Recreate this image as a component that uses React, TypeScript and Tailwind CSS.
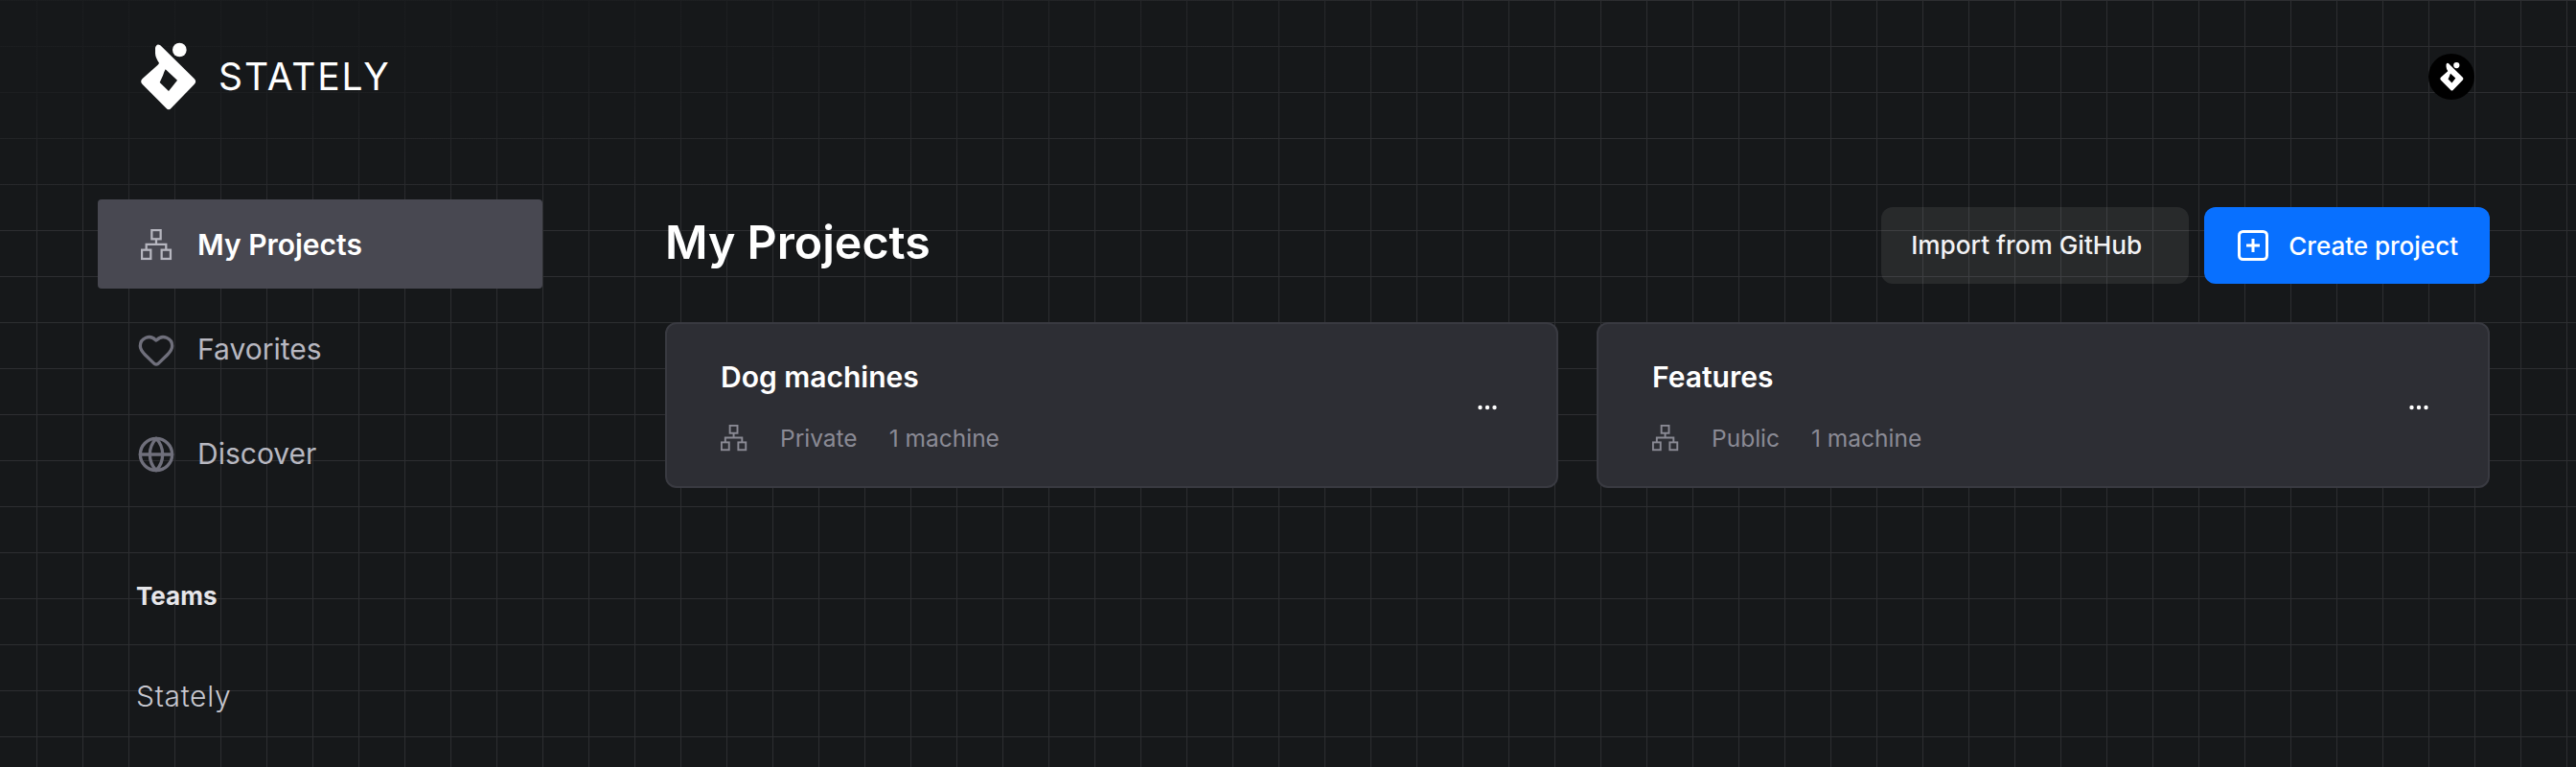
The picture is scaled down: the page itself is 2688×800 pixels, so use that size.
import { Globe, Heart } from "lucide-react";

const navItems = [
  { label: "My Projects", icon: "projects", active: true },
  { label: "Favorites", icon: "heart", active: false },
  { label: "Discover", icon: "globe", active: false },
];

const projects = [
  { name: "Dog machines", visibility: "Private" },
  { name: "Features", visibility: "Public" },
];

function ProjectsIcon({ className }: { className?: string }) {
  return (
    <svg viewBox="0 0 32 32" fill="none" stroke="currentColor" strokeWidth="2.2" className={className}>
      <rect x="11" y="1" width="9" height="9" />
      <rect x="1" y="21" width="9" height="9" />
      <rect x="21" y="21" width="9" height="9" />
      <path d="M15.5 10v5.5M5.5 21v-5.5h20V21" />
    </svg>
  );
}

function Logo({ className }: { className?: string }) {
  return (
    <svg viewBox="0 0 216 240" fill="currentColor" className={className}>
      <path
        fillRule="evenodd"
        d="M66 30Q70 14 82 22L188 126Q197 135 188 144L116 218Q108 228 100 218L26 144Q17 135 26 126L74 83Q77 80 78 77Q66 60 66 46ZM80 138L90 116Q93 106 98 97L135 131L108 165Z"
      />
      <circle cx="142" cy="36" r="22" />
    </svg>
  );
}

export default function App() {
  return (
    <div className="relative h-[800px] overflow-hidden bg-[#16181a] font-['Inter',sans-serif] [background-image:radial-gradient(ellipse_2000px_280px_at_0_0,rgba(22,24,26,0.8)_30%,transparent_85%),linear-gradient(to_right,#2d2e31_1px,transparent_1px),linear-gradient(to_bottom,#2d2e31_1px,transparent_1px)] [background-size:100%_100%,48px_48px,48px_48px] [background-position:0_0,38px_0,0_0]">
      {/* Header */}
      <header className="flex h-40 items-center justify-between pl-[140px] pr-[106px]">
        <div className="flex items-center gap-[16px]">
          <Logo className="h-20 w-[72px] text-white" />
          <span className="pb-[2px] text-[39px] font-normal leading-none tracking-[1.9px] text-white">STATELY</span>
        </div>
        <div className="flex h-12 w-12 items-center justify-center rounded-full bg-black">
          <Logo className="h-[34px] w-[31px] text-white" />
        </div>
      </header>

      <div className="flex pl-[102px] pr-[90px] pt-12">
        {/* Sidebar */}
        <aside className="w-[464px] shrink-0">
          <nav className="flex flex-col gap-4">
            {navItems.map((item) => (
              <a
                key={item.label}
                className={`flex h-[93px] items-center gap-[25px] rounded-[4px] pl-[43px] pt-[2px] text-[30px] ${
                  item.active ? "bg-[#484851] font-semibold text-white" : "font-normal text-[#b8b8c1]"
                }`}
              >
                <span className={`flex w-[36px] justify-center ${item.active ? "text-[#b6b6bf]" : "text-[#6f6f7b]"}`}>
                  {item.icon === "projects" && <ProjectsIcon className="h-[33px] w-[33px]" />}
                  {item.icon === "heart" && <Heart className="h-10 w-10 shrink-0" strokeWidth={2} />}
                  {item.icon === "globe" && <Globe className="h-10 w-10 shrink-0" strokeWidth={2} />}
                </span>
                {item.label}
              </a>
            ))}
          </nav>
          <h3 className="mt-[87px] pl-[40px] text-[26px] font-bold leading-8 text-[#e6e6ea]">Teams</h3>
          <p className="mt-[70px] pl-[40px] text-[30px] font-light leading-9 tracking-[0.7px] text-[#c8c8d0]">Stately</p>
        </aside>

        {/* Main */}
        <main className="ml-[128px] flex-1 pt-2">
          <div className="flex h-20 items-center justify-between">
            <h1 className="pb-[6px] text-[48.3px] font-semibold text-white">My Projects</h1>
            <div className="flex gap-4">
              <button className="h-20 rounded-xl bg-white/[0.08] pl-[31px] pr-[49px] text-[26.2px] font-medium text-[#f2f2f4]">
                Import from GitHub
              </button>
              <button className="flex h-20 items-center gap-[21px] rounded-xl bg-[#0870ff] pl-[35px] pr-[33px] text-[26px] font-medium text-white">
                <svg viewBox="0 0 32 32" fill="none" stroke="currentColor" strokeWidth="3" className="h-8 w-8">
                  <rect x="1.5" y="1.5" width="29" height="29" rx="4" />
                  <path d="M16 9v14M9 16h14" />
                </svg>
                Create project
              </button>
            </div>
          </div>
          <div className="mt-10 grid grid-cols-2 gap-10">
            {projects.map((project) => (
              <div
                key={project.name}
                className="flex h-[173px] items-center justify-between rounded-xl border-2 border-[#393a41] bg-[#2d2e34] pl-[56px] pr-[62px]"
              >
                <div className="pt-[2px]">
                  <h2 className="text-[30px] font-semibold leading-9 text-white">{project.name}</h2>
                  <div className="mt-[30px] flex items-center text-[24.5px] leading-8 text-[#8a8a94]">
                    <ProjectsIcon className="mr-[34px] h-7 w-7" />
                    <span className="mr-[33px]">{project.visibility}</span>
                    <span>1 machine</span>
                  </div>
                </div>
                <svg viewBox="0 0 20 6" fill="#ffffff" className="mt-[5px] h-[6px] w-5">
                  <circle cx="2.5" cy="3" r="2.2" />
                  <circle cx="10" cy="3" r="2.2" />
                  <circle cx="17.5" cy="3" r="2.2" />
                </svg>
              </div>
            ))}
          </div>
        </main>
      </div>
    </div>
  );
}
